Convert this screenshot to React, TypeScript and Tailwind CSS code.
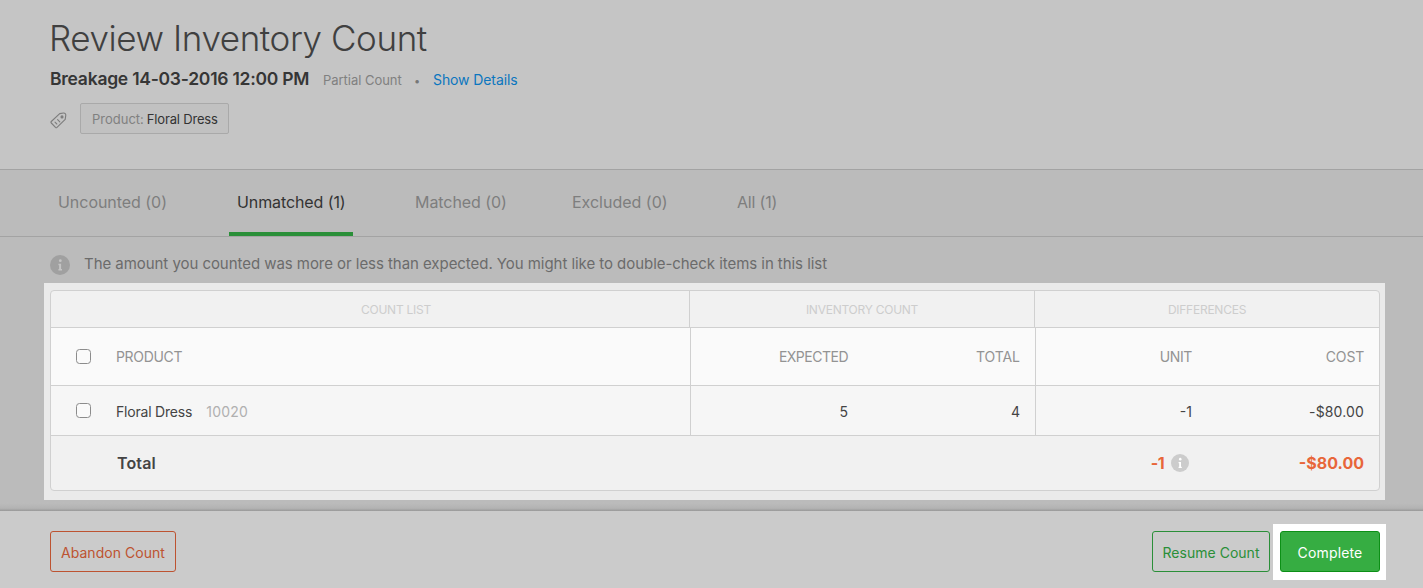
function InfoIcon({ className, fill, glyph }: { className: string; fill: string; glyph: string }) {
  return (
    <svg viewBox="0 0 20 20" className={className} aria-hidden="true">
      <circle cx="10" cy="10" r="10" fill={fill} />
      <circle cx="10.3" cy="5.7" r="1.4" fill={glyph} />
      <path d="M8.4 8.8h2.7v5.300h.9v1.400H8.400v-1.400h.7v-3.900h-.7z" fill={glyph} />
    </svg>
  );
}

function TagIcon() {
  return (
    <svg
      viewBox="0 0 17 17"
      className="mt-[3px] h-[17px] w-[17px] shrink-0"
      fill="none"
      stroke="#7d7d7d"
      strokeWidth="1.1"
      strokeLinecap="round"
      strokeLinejoin="round"
      aria-hidden="true"
    >
      <path d="M9.7 1.6 13.6 1c1.3-.1 2.3.9 2.2 2.2l-.6 4.1L7 15.4c-.5.5-1 .5-1.500 0L1.300 11c-.5-.5-.5-1 0-1.500z" />
      <circle cx="12" cy="4.900" r="1" fill="#7d7d7d" />
      <path d="M5 10.200 6.800 12M7.600 7.600l2.200 2.200" />
    </svg>
  );
}

const tabs = [
  { label: "Uncounted (0)", cell: "w-[179px] pl-2", text: "tracking-[-0.04px]" },
  { label: "Unmatched (1)", cell: "w-[178px] pl-2", text: "tracking-[-0.1px]", active: true },
  { label: "Matched (0)", cell: "w-[157px] pl-2", text: "tracking-[-0.06px]" },
  { label: "Excluded (0)", cell: "w-[165px] pl-2", text: "tracking-[-0.01px]" },
  { label: "All (1)", cell: "w-[60px] pl-2", text: "tracking-[-0.2px]" },
];

function Checkbox() {
  return <span className="block h-[15px] w-[15px] rounded-[3.5px] border border-[#8c8c8c] bg-[#fafafa]" />;
}

function CountTable() {
  return (
    <div className="ml-[44px] w-[1341px] bg-[#eaeaea] pt-[7px] pr-[5px] pb-[9px] pl-[6px]">
      <div className="h-[201px] overflow-hidden rounded-[4px] border border-[#d0d0d0] bg-[#f1f1f1]">
        <div className="flex h-[37px] border-b border-[#d0d0d0] text-center text-[12px] leading-[37px] text-[#cdcdcd]">
          <div className="w-[639px] border-r border-[#d0d0d0] pl-[52px] tracking-[-0.25px]">COUNT LIST</div>
          <div className="w-[345px] border-r border-[#d0d0d0] tracking-[-0.25px]">INVENTORY COUNT</div>
          <div className="flex-1 tracking-[-0.25px]">DIFFERENCES</div>
        </div>
        <div className="flex h-[58px] border-b border-[#d0d0d0] bg-[#fafafa] text-[14px] leading-[57px] text-[#939393]">
          <div className="flex w-[640px] items-center border-r border-[#d0d0d0] pl-[25px]">
            <Checkbox />
            <span className="ml-[25px] tracking-[-0.33px]">PRODUCT</span>
          </div>
          <div className="flex w-[345px] border-r border-[#d0d0d0] pr-[15px] text-right">
            <span className="w-[157px] tracking-[-0.5px]">EXPECTED</span>
            <span className="flex-1 tracking-[-0.05px]">TOTAL</span>
          </div>
          <div className="flex flex-1 pr-[15px] text-right">
            <span className="w-[156px] tracking-[-0.4px]">UNIT</span>
            <span className="flex-1 tracking-[-0.2px]">COST</span>
          </div>
        </div>
        <div className="flex h-[50px] border-b border-[#d0d0d0] bg-[#f6f6f6] text-[14px] leading-[50px] text-[#444]">
          <div className="flex w-[640px] items-center border-r border-[#d0d0d0] pl-[25px]">
            <Checkbox />
            <span className="ml-[25px] pt-[3px] tracking-[-0.2px]">Floral Dress</span>
            <span className="ml-[14px] pt-[3px] tracking-[0.25px] text-[#b0b0b0]">10020</span>
          </div>
          <div className="flex w-[345px] border-r border-[#d0d0d0] pt-px pr-[15px] text-right">
            <span className="w-[157px]">5</span>
            <span className="flex-1">4</span>
          </div>
          <div className="flex flex-1 pt-px pr-[15px] text-right">
            <span className="w-[156px]">-1</span>
            <span className="flex-1 tracking-[0.15px]">-$80.00</span>
          </div>
        </div>
        <div className="flex h-[54px] items-center pr-[15px] text-[16px] font-semibold text-[#444]">
          <span className="w-[985px] pl-[66px] tracking-[0.15px]">Total</span>
          <span className="flex w-[153px] items-center justify-end gap-[7px] text-[#e8663a]">
            <span className="font-bold tracking-[-0.6px]">-1</span>
            <InfoIcon className="h-[18px] w-[18px]" fill="#cccccc" glyph="#ffffff" />
          </span>
          <span className="flex-1 text-right font-bold text-[#e8663a]">-$80.00</span>
        </div>
      </div>
    </div>
  );
}

export default function App() {
  return (
    <div className="flex h-[588px] w-[1423px] flex-col overflow-hidden bg-[#bbbbbb] font-['Inter',sans-serif]">
      <header className="h-[170px] shrink-0 border-b border-[#a3a3a3] bg-[#c5c5c5] pl-[50px] pt-[18px]">
        <h1 className="-ml-px h-[40px] whitespace-nowrap text-[35px] font-light leading-[40px] tracking-[-0.42px] text-[#404040]">
          Review Inventory Count
        </h1>
        <div className="mt-[10px] flex h-[22px] items-baseline whitespace-nowrap leading-[22px]">
          <h2 className="w-[273px] text-[17.5px] font-semibold tracking-[-0.25px] text-[#363636]">
            Breakage 14-03-2016 12:00 PM
          </h2>
          <span className="w-[91px] text-[13px] tracking-[-0.03px] text-[#808080]">Partial Count</span>
          <span className="w-[19px] text-[11px] text-[#777]">•</span>
          <a className="text-[14px] tracking-[-0.1px] text-[#0b76bf]">Show Details</a>
        </div>
        <div className="mt-[13px] flex h-[31px] items-center">
          <TagIcon />
          <div className="ml-[13px] flex h-[31px] w-[149px] items-center gap-[3px] rounded-[2px] border border-[#a9a9a9] bg-[#c1c1c1] pt-px pl-[11px] text-[13px] leading-[20px] whitespace-nowrap">
            <span className="text-[#808080]">Product:</span>
            <span className="tracking-[-0.18px] text-[#333]">Floral Dress</span>
          </div>
        </div>
      </header>

      <nav className="flex h-[67px] shrink-0 border-b border-[#a3a3a3] pl-[50px] text-[16px] leading-[65px]">
        {tabs.map((tab) => (
          <div key={tab.label} className={`${tab.cell} ${tab.text} whitespace-nowrap`}>
            {tab.active ? (
              <div className="-ml-2 h-[66px] w-[124px] border-b-4 border-[#2a8f38] pl-2 text-[#333]">{tab.label}</div>
            ) : (
              <span className="text-[#7e7e7e]">{tab.label}</span>
            )}
          </div>
        ))}
      </nav>

      <div className="flex h-[46px] shrink-0 pl-[50px] pt-[17px]">
        <InfoIcon className="mt-px h-[20px] w-[20px]" fill="#a0a0a0" glyph="#c4c4c4" />
        <p className="ml-[14px] h-[20px] whitespace-nowrap text-[15px] leading-[20px] tracking-[-0.05px] text-[#6b6b6b]">
          The amount you counted was more or less than expected. You might like to double-check items in this list
        </p>
      </div>

      <main className="h-[217px] shrink-0">
        <CountTable />
      </main>
      <div className="h-[11px] shrink-0 bg-linear-to-b from-[#bbbbbb] from-30% via-[#b3b3b3] via-75% to-[#999]" />

      <footer className="flex h-[77px] shrink-0 bg-[#cbcbcb] pl-[50px] text-[14px] leading-[21px]">
        <button className="mt-5 flex h-[41px] w-[126px] items-center justify-center rounded-[3px] border border-[#bd5331] pt-[2px] tracking-[0.04px] text-[#bd5331]">
          Abandon Count
        </button>
        <button className="mt-5 ml-auto flex h-[41px] w-[118px] items-center justify-center rounded-[3px] border border-[#2a8f38] pt-[2px] tracking-[0.02px] text-[#2a8f38]">
          Resume Count
        </button>
        <div className="mt-[13px] mr-[37px] ml-[3px] h-[56px] w-[113px] bg-white pt-[7px] pl-[7px]">
          <button className="flex h-[41px] w-[100px] items-center justify-center rounded-[3px] border border-[#0c9016] bg-[#36ad42] pt-[2px] tracking-[0.15px] text-white">
            Complete
          </button>
        </div>
      </footer>
    </div>
  );
}
